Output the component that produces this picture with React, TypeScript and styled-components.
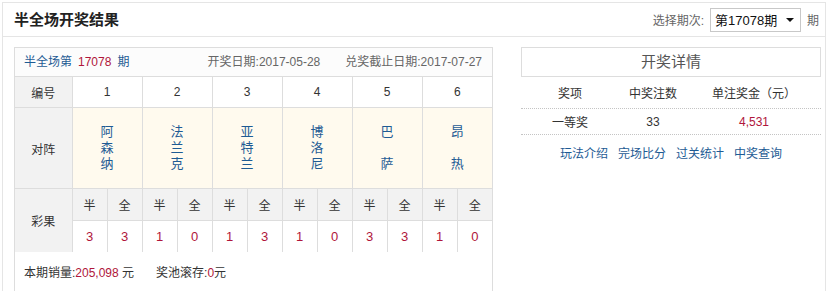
import * as React from 'react';
import styled, { createGlobalStyle } from 'styled-components';

const GlobalStyle = createGlobalStyle`
  body {
    margin: 0;
    background: #fff;
    font-family: "Liberation Sans", "Noto Sans CJK SC", sans-serif;
    font-size: 12px;
    color: #333;
  }
`;

const Page = styled.div`
  margin: 2px 0 0 2px;
  width: 822px;
  height: 288px;
  border: 1px solid #e5e5e5;
  border-bottom: none;
  overflow: hidden;
`;

const TopBar = styled.div`
  display: flex;
  align-items: center;
  justify-content: space-between;
  height: 33px;
  border-bottom: 1px solid #e5e5e5;
  padding: 0 6px 0 11px;
`;

const Title = styled.h2`
  margin: 0;
  font-size: 15px;
  font-weight: bold;
  color: #222;
  line-height: 20px;
`;

const IssuePicker = styled.div`
  display: flex;
  align-items: center;
  color: #666;
  gap: 6px;
`;

const FakeSelect = styled.div`
  display: flex;
  align-items: center;
  justify-content: space-between;
  box-sizing: border-box;
  width: 91px;
  height: 24px;
  border: 1px solid #c8c8c8;
  padding: 0 6px 0 4px;
  color: #111;
  font-size: 13px;
  background: #fff;
`;

const Caret = styled.span`
  width: 0;
  height: 0;
  border-left: 4px solid transparent;
  border-right: 4px solid transparent;
  border-top: 4px solid #111;
`;

const Content = styled.div`
  display: flex;
  gap: 28px;
  padding: 10px 0 0 11px;
`;

const ResultPanel = styled.div`
  box-sizing: border-box;
  width: 479px;
  height: 244px;
  border: 1px solid #ddd;
  border-bottom: none;
`;

const PanelHead = styled.div`
  display: flex;
  justify-content: space-between;
  height: 28px;
  line-height: 28px;
  padding: 0 10px 0 9px;
  border-bottom: 1px solid #ddd;
  background: #fcfcfc;
  color: #666;
`;

const Blue = styled.span`
  color: #1e5b94;
`;

const Red = styled.span<{ $gap?: boolean }>`
  color: #b0163b;
  margin: ${p => (p.$gap ? '0 6px' : '0')};
`;

const Dates = styled.div`
  display: flex;
  gap: 25px;
`;

const Grid = styled.table`
  width: 100%;
  border-collapse: collapse;
  border-style: hidden;
  table-layout: fixed;
  text-align: center;
`;

const Cell = styled.td<{ $bg?: string; $h?: number; $tone?: 'red' }>`
  border: 1px solid #ddd;
  padding: 0;
  height: ${p => (p.$h ? `${p.$h}px` : 'auto')};
  background: ${p => p.$bg || '#fff'};
  color: ${p => (p.$tone === 'red' ? '#b0163b' : '#333')};
  font-size: ${p => (p.$tone === 'red' ? '13px' : '12px')};
  vertical-align: middle;
`;

const TeamName = styled.div`
  display: flex;
  flex-direction: column;
  align-items: center;
  line-height: 16px;
  font-size: 13px;
  color: #1e5b94;
`;

const Footer = styled.div`
  height: 42px;
  line-height: 42px;
  padding-left: 9px;
  color: #333;
`;

const Spacer = styled.span`
  display: inline-block;
  width: 22px;
`;

const DetailPanel = styled.div`
  width: 300px;
`;

const DetailTitle = styled.div`
  height: 28px;
  line-height: 28px;
  border: 1px solid #ddd;
  text-align: center;
  font-size: 15px;
  color: #555;
`;

const PrizeRow = styled.div<{ $h: number }>`
  display: grid;
  grid-template-columns: 98px 68px 1fr;
  align-items: center;
  height: ${p => p.$h}px;
  border-bottom: 1px dotted #c4c4c4;
  text-align: center;
  color: #333;
`;

const Links = styled.div`
  display: flex;
  justify-content: center;
  gap: 10px;
  margin-top: 9px;
  line-height: 20px;
`;

const LinkItem = styled.a`
  color: #1e5b94;
  text-decoration: none;
`;

const matches = [
  { no: 1, team: ['阿', '森', '纳'], half: 3, full: 3 },
  { no: 2, team: ['法', '兰', '克'], half: 1, full: 0 },
  { no: 3, team: ['亚', '特', '兰'], half: 1, full: 3 },
  { no: 4, team: ['博', '洛', '尼'], half: 1, full: 0 },
  { no: 5, team: ['巴', '\u00a0', '萨'], half: 3, full: 3 },
  { no: 6, team: ['昂', '\u00a0', '热'], half: 1, full: 0 },
];

const LABEL_BG = '#f2f2f2';
const CREAM = '#fffaee';

export default function App() {
  return (
    <>
      <GlobalStyle />
      <Page>
        <TopBar>
          <Title>半全场开奖结果</Title>
          <IssuePicker>
            <span>选择期次:</span>
            <FakeSelect>
              <span>第17078期</span>
              <Caret />
            </FakeSelect>
            <span>期</span>
          </IssuePicker>
        </TopBar>
        <Content>
          <ResultPanel>
            <PanelHead>
              <Blue>
                半全场第<Red $gap>17078</Red>期
              </Blue>
              <Dates>
                <span>开奖日期:2017-05-28</span>
                <span>兑奖截止日期:2017-07-27</span>
              </Dates>
            </PanelHead>
            <Grid>
              <colgroup>
                <col style={{ width: 57 }} />
                {Array.from({ length: 12 }).map((_, i) => (
                  <col key={i} style={{ width: 35 }} />
                ))}
              </colgroup>
              <tbody>
                <tr>
                  <Cell $bg={LABEL_BG} $h={30}>编号</Cell>
                  {matches.map(m => (
                    <Cell key={m.no} colSpan={2}>{m.no}</Cell>
                  ))}
                </tr>
                <tr>
                  <Cell $bg={LABEL_BG} $h={80}>对阵</Cell>
                  {matches.map(m => (
                    <Cell key={m.no} colSpan={2} $bg={CREAM}>
                      <TeamName>
                        {m.team.map((c, i) => (
                          <span key={i}>{c}</span>
                        ))}
                      </TeamName>
                    </Cell>
                  ))}
                </tr>
                <tr>
                  <Cell $bg={LABEL_BG} rowSpan={2}>彩果</Cell>
                  {matches.map(m => (
                    <React.Fragment key={m.no}>
                      <Cell $bg={LABEL_BG} $h={31}>半</Cell>
                      <Cell $bg={LABEL_BG}>全</Cell>
                    </React.Fragment>
                  ))}
                </tr>
                <tr>
                  {matches.map(m => (
                    <React.Fragment key={m.no}>
                      <Cell $h={31} $tone="red">{m.half}</Cell>
                      <Cell $tone="red">{m.full}</Cell>
                    </React.Fragment>
                  ))}
                </tr>
              </tbody>
            </Grid>
            <Footer>
              本期销量:<Red>205,098</Red> 元<Spacer />奖池滚存:<Red>0</Red>元
            </Footer>
          </ResultPanel>
          <DetailPanel>
            <DetailTitle>开奖详情</DetailTitle>
            <PrizeRow $h={31}>
              <span>奖项</span>
              <span>中奖注数</span>
              <span>单注奖金（元）</span>
            </PrizeRow>
            <PrizeRow $h={25}>
              <span>一等奖</span>
              <span>33</span>
              <Red>4,531</Red>
            </PrizeRow>
            <Links>
              <LinkItem href="#">玩法介绍</LinkItem>
              <LinkItem href="#">完场比分</LinkItem>
              <LinkItem href="#">过关统计</LinkItem>
              <LinkItem href="#">中奖查询</LinkItem>
            </Links>
          </DetailPanel>
        </Content>
      </Page>
    </>
  );
}
